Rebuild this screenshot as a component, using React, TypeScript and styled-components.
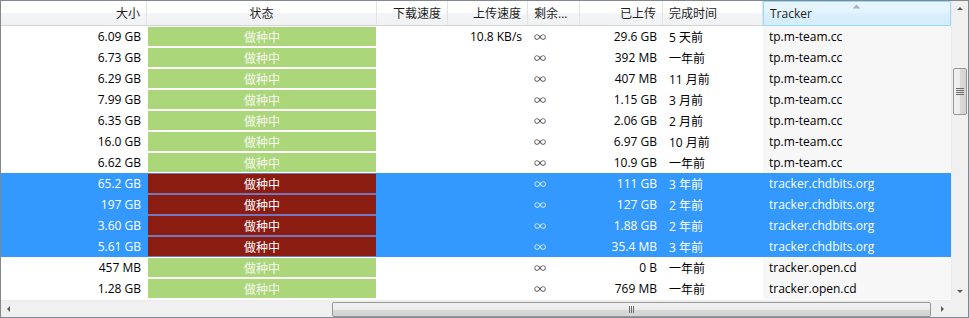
import React from "react";
import styled, { createGlobalStyle, css } from "styled-components";

const Global = createGlobalStyle`
  html, body { margin: 0; padding: 0; background: #ffffff; }
  body { font-family: "Open Sans", "Noto Sans CJK SC", sans-serif; font-size: 12px; }
`;

const COLS = "146px 230px 71px 80px 52px 83px 100px 188px";

const Frame = styled.div`
  width: 969px;
  height: 318px;
  box-sizing: border-box;
  border: 1px solid #828790;
  display: grid;
  grid-template-columns: 950px 17px;
  grid-template-rows: 299px 17px;
  background: #ffffff;
  overflow: hidden;
`;

const TableArea = styled.div`
  display: flex;
  flex-direction: column;
  overflow: hidden;
`;

const HeaderRow = styled.div`
  display: grid;
  grid-template-columns: ${COLS};
  height: 25px;
  box-sizing: border-box;
  border-bottom: 1px solid #d5d5d5;
  background: linear-gradient(to bottom, #ffffff 0%, #ffffff 45%, #f3f4f6 55%, #f1f2f4 100%);
`;

type Align = "left" | "right" | "center";

const justify = (a: Align) => (a === "left" ? "flex-start" : a === "right" ? "flex-end" : "center");

const HeaderCell = styled.div<{ $align: Align; $sorted?: boolean }>`
  position: relative;
  display: flex;
  align-items: center;
  justify-content: ${(p) => justify(p.$align)};
  padding: 0 6px;
  box-sizing: border-box;
  border-right: 1px solid #e2e3e6;
  color: #1e1e1e;
  white-space: nowrap;
  overflow: hidden;
  ${(p) =>
    p.$sorted &&
    css`
      border: 1px solid #96d9f9;
      margin-bottom: -1px;
      background: linear-gradient(to bottom, #e8f6fd 0%, #e3f4fd 45%, #d8effc 55%, #d4edfb 100%);
    `}
`;

const SortArrow = styled.svg`
  position: absolute;
  top: 2px;
  left: 88px;
`;

const Row = styled.div<{ $selected?: boolean }>`
  display: grid;
  grid-template-columns: ${COLS};
  height: 21px;
  background: ${(p) => (p.$selected ? "#3399ff" : "#ffffff")};
  color: ${(p) => (p.$selected ? "#ffffff" : "#000000")};
`;

const Cell = styled.div<{ $align: Align; $sorted?: boolean; $selected?: boolean }>`
  display: flex;
  align-items: center;
  justify-content: ${(p) => justify(p.$align)};
  padding: 0 6px;
  box-sizing: border-box;
  white-space: nowrap;
  overflow: hidden;
  background: ${(p) => (p.$sorted && !p.$selected ? "#f7f7f7" : "transparent")};
`;

const Infinity = styled.span`
  font-family: "Noto Sans CJK SC", sans-serif;
  font-size: 12px;
  font-weight: 300;
`;

const StatusCell = styled.div`
  display: flex;
  padding: 0 1px;
  box-sizing: border-box;
`;

const StatusWrap = styled.div<{ $selected?: boolean }>`
  flex: 1;
  display: flex;
  padding: 1px 0;
  background: ${(p) => (p.$selected ? "#7676bc" : "transparent")};
`;

const StatusBar = styled.div<{ $selected?: boolean }>`
  flex: 1;
  display: flex;
  align-items: center;
  justify-content: center;
  background: ${(p) => (p.$selected ? "#8b1c12" : "#acd67a")};
  color: ${(p) => (p.$selected ? "#ffffff" : "#f4faee")};
  font-size: 12px;
`;

const VScroll = styled.div`
  display: flex;
  flex-direction: column;
  background: #f0f0f0;
  border-left: 1px solid #ececec;
  box-sizing: border-box;
`;

const HScroll = styled.div`
  display: flex;
  flex-direction: row;
  background: #f0f0f0;
  border-top: 1px solid #ececec;
  box-sizing: border-box;
`;

const Corner = styled.div`
  background: #f0f0f0;
`;

const ArrowBtn = styled.div`
  width: 16px;
  height: 16px;
  flex: none;
  display: flex;
  align-items: center;
  justify-content: center;
`;

const VTrack = styled.div`
  flex: 1;
  display: flex;
  flex-direction: column;
  align-items: center;
`;

const HTrack = styled.div`
  flex: 1;
  display: flex;
  flex-direction: row;
  align-items: center;
`;

const VThumb = styled.div`
  margin-top: 51px;
  width: 14px;
  height: 47px;
  box-sizing: border-box;
  border: 1px solid #979797;
  border-radius: 2px;
  background: linear-gradient(to right, #f2f2f2 0%, #ebebeb 50%, #d9d9d9 51%, #d4d4d4 100%);
  display: flex;
  align-items: center;
  justify-content: center;
`;

const HThumb = styled.div`
  margin-left: 315px;
  width: 599px;
  height: 15px;
  box-sizing: border-box;
  border: 1px solid #979797;
  border-radius: 2px;
  background: linear-gradient(to bottom, #f2f2f2 0%, #ebebeb 50%, #d9d9d9 51%, #d4d4d4 100%);
  display: flex;
  align-items: center;
  justify-content: center;
`;

type RowData = {
  size: string;
  up: string;
  uploaded: string;
  done: string;
  tracker: string;
  selected?: boolean;
};

const rows: RowData[] = [
  { size: "6.09 GB", up: "10.8 KB/s", uploaded: "29.6 GB", done: "5 天前", tracker: "tp.m-team.cc" },
  { size: "6.73 GB", up: "", uploaded: "392 MB", done: "一年前", tracker: "tp.m-team.cc" },
  { size: "6.29 GB", up: "", uploaded: "407 MB", done: "11 月前", tracker: "tp.m-team.cc" },
  { size: "7.99 GB", up: "", uploaded: "1.15 GB", done: "3 月前", tracker: "tp.m-team.cc" },
  { size: "6.35 GB", up: "", uploaded: "2.06 GB", done: "2 月前", tracker: "tp.m-team.cc" },
  { size: "16.0 GB", up: "", uploaded: "6.97 GB", done: "10 月前", tracker: "tp.m-team.cc" },
  { size: "6.62 GB", up: "", uploaded: "10.9 GB", done: "一年前", tracker: "tp.m-team.cc" },
  { size: "65.2 GB", up: "", uploaded: "111 GB", done: "3 年前", tracker: "tracker.chdbits.org", selected: true },
  { size: "197 GB", up: "", uploaded: "127 GB", done: "2 年前", tracker: "tracker.chdbits.org", selected: true },
  { size: "3.60 GB", up: "", uploaded: "1.88 GB", done: "2 年前", tracker: "tracker.chdbits.org", selected: true },
  { size: "5.61 GB", up: "", uploaded: "35.4 MB", done: "3 年前", tracker: "tracker.chdbits.org", selected: true },
  { size: "457 MB", up: "", uploaded: "0 B", done: "一年前", tracker: "tracker.open.cd" },
  { size: "1.28 GB", up: "", uploaded: "769 MB", done: "一年前", tracker: "tracker.open.cd" },
];

const Tri = ({ dir }: { dir: "up" | "down" | "left" | "right" }) => {
  const pts = {
    up: "1,5 4,2 7,5",
    down: "1,2 4,5 7,2",
    left: "5,1 2,4 5,7",
    right: "2,1 5,4 2,7",
  }[dir];
  return (
    <svg width="8" height="8" viewBox="0 0 8 8">
      <polygon points={pts} fill="#5a5a5a" />
    </svg>
  );
};

export default function App() {
  return (
    <>
      <Global />
      <Frame>
        <TableArea>
          <HeaderRow>
            <HeaderCell $align="right">大小</HeaderCell>
            <HeaderCell $align="center">状态</HeaderCell>
            <HeaderCell $align="right">下载速度</HeaderCell>
            <HeaderCell $align="right">上传速度</HeaderCell>
            <HeaderCell $align="left">剩余...</HeaderCell>
            <HeaderCell $align="right">已上传</HeaderCell>
            <HeaderCell $align="left">完成时间</HeaderCell>
            <HeaderCell $align="left" $sorted>
              Tracker
              <SortArrow width="9" height="5" viewBox="0 0 9 5">
                <polygon points="0.5,4.5 4.5,0.5 8.5,4.5" fill="#a3b3c4" />
              </SortArrow>
            </HeaderCell>
          </HeaderRow>
          {rows.map((r, i) => (
            <Row key={i} $selected={r.selected}>
              <Cell $align="right">{r.size}</Cell>
              <StatusCell>
                <StatusWrap $selected={r.selected}>
                  <StatusBar $selected={r.selected}>做种中</StatusBar>
                </StatusWrap>
              </StatusCell>
              <Cell $align="right"></Cell>
              <Cell $align="right">{r.up}</Cell>
              <Cell $align="left">
                <Infinity>∞</Infinity>
              </Cell>
              <Cell $align="right">{r.uploaded}</Cell>
              <Cell $align="left">{r.done}</Cell>
              <Cell $align="left" $sorted $selected={r.selected}>
                {r.tracker}
              </Cell>
            </Row>
          ))}
        </TableArea>
        <VScroll>
          <ArrowBtn>
            <Tri dir="up" />
          </ArrowBtn>
          <VTrack>
            <VThumb>
              <svg width="8" height="7" viewBox="0 0 8 7">
                <rect x="0" y="0" width="8" height="1" fill="#6b6b6b" />
                <rect x="0" y="2" width="8" height="1" fill="#6b6b6b" />
                <rect x="0" y="4" width="8" height="1" fill="#6b6b6b" />
                <rect x="0" y="6" width="8" height="1" fill="#6b6b6b" />
              </svg>
            </VThumb>
          </VTrack>
          <ArrowBtn>
            <Tri dir="down" />
          </ArrowBtn>
        </VScroll>
        <HScroll>
          <ArrowBtn>
            <Tri dir="left" />
          </ArrowBtn>
          <HTrack>
            <HThumb>
              <svg width="5" height="7" viewBox="0 0 5 7">
                <rect x="0" y="0" width="1" height="7" fill="#6b6b6b" />
                <rect x="2" y="0" width="1" height="7" fill="#6b6b6b" />
                <rect x="4" y="0" width="1" height="7" fill="#6b6b6b" />
              </svg>
            </HThumb>
          </HTrack>
          <ArrowBtn>
            <Tri dir="right" />
          </ArrowBtn>
        </HScroll>
        <Corner />
      </Frame>
    </>
  );
}
